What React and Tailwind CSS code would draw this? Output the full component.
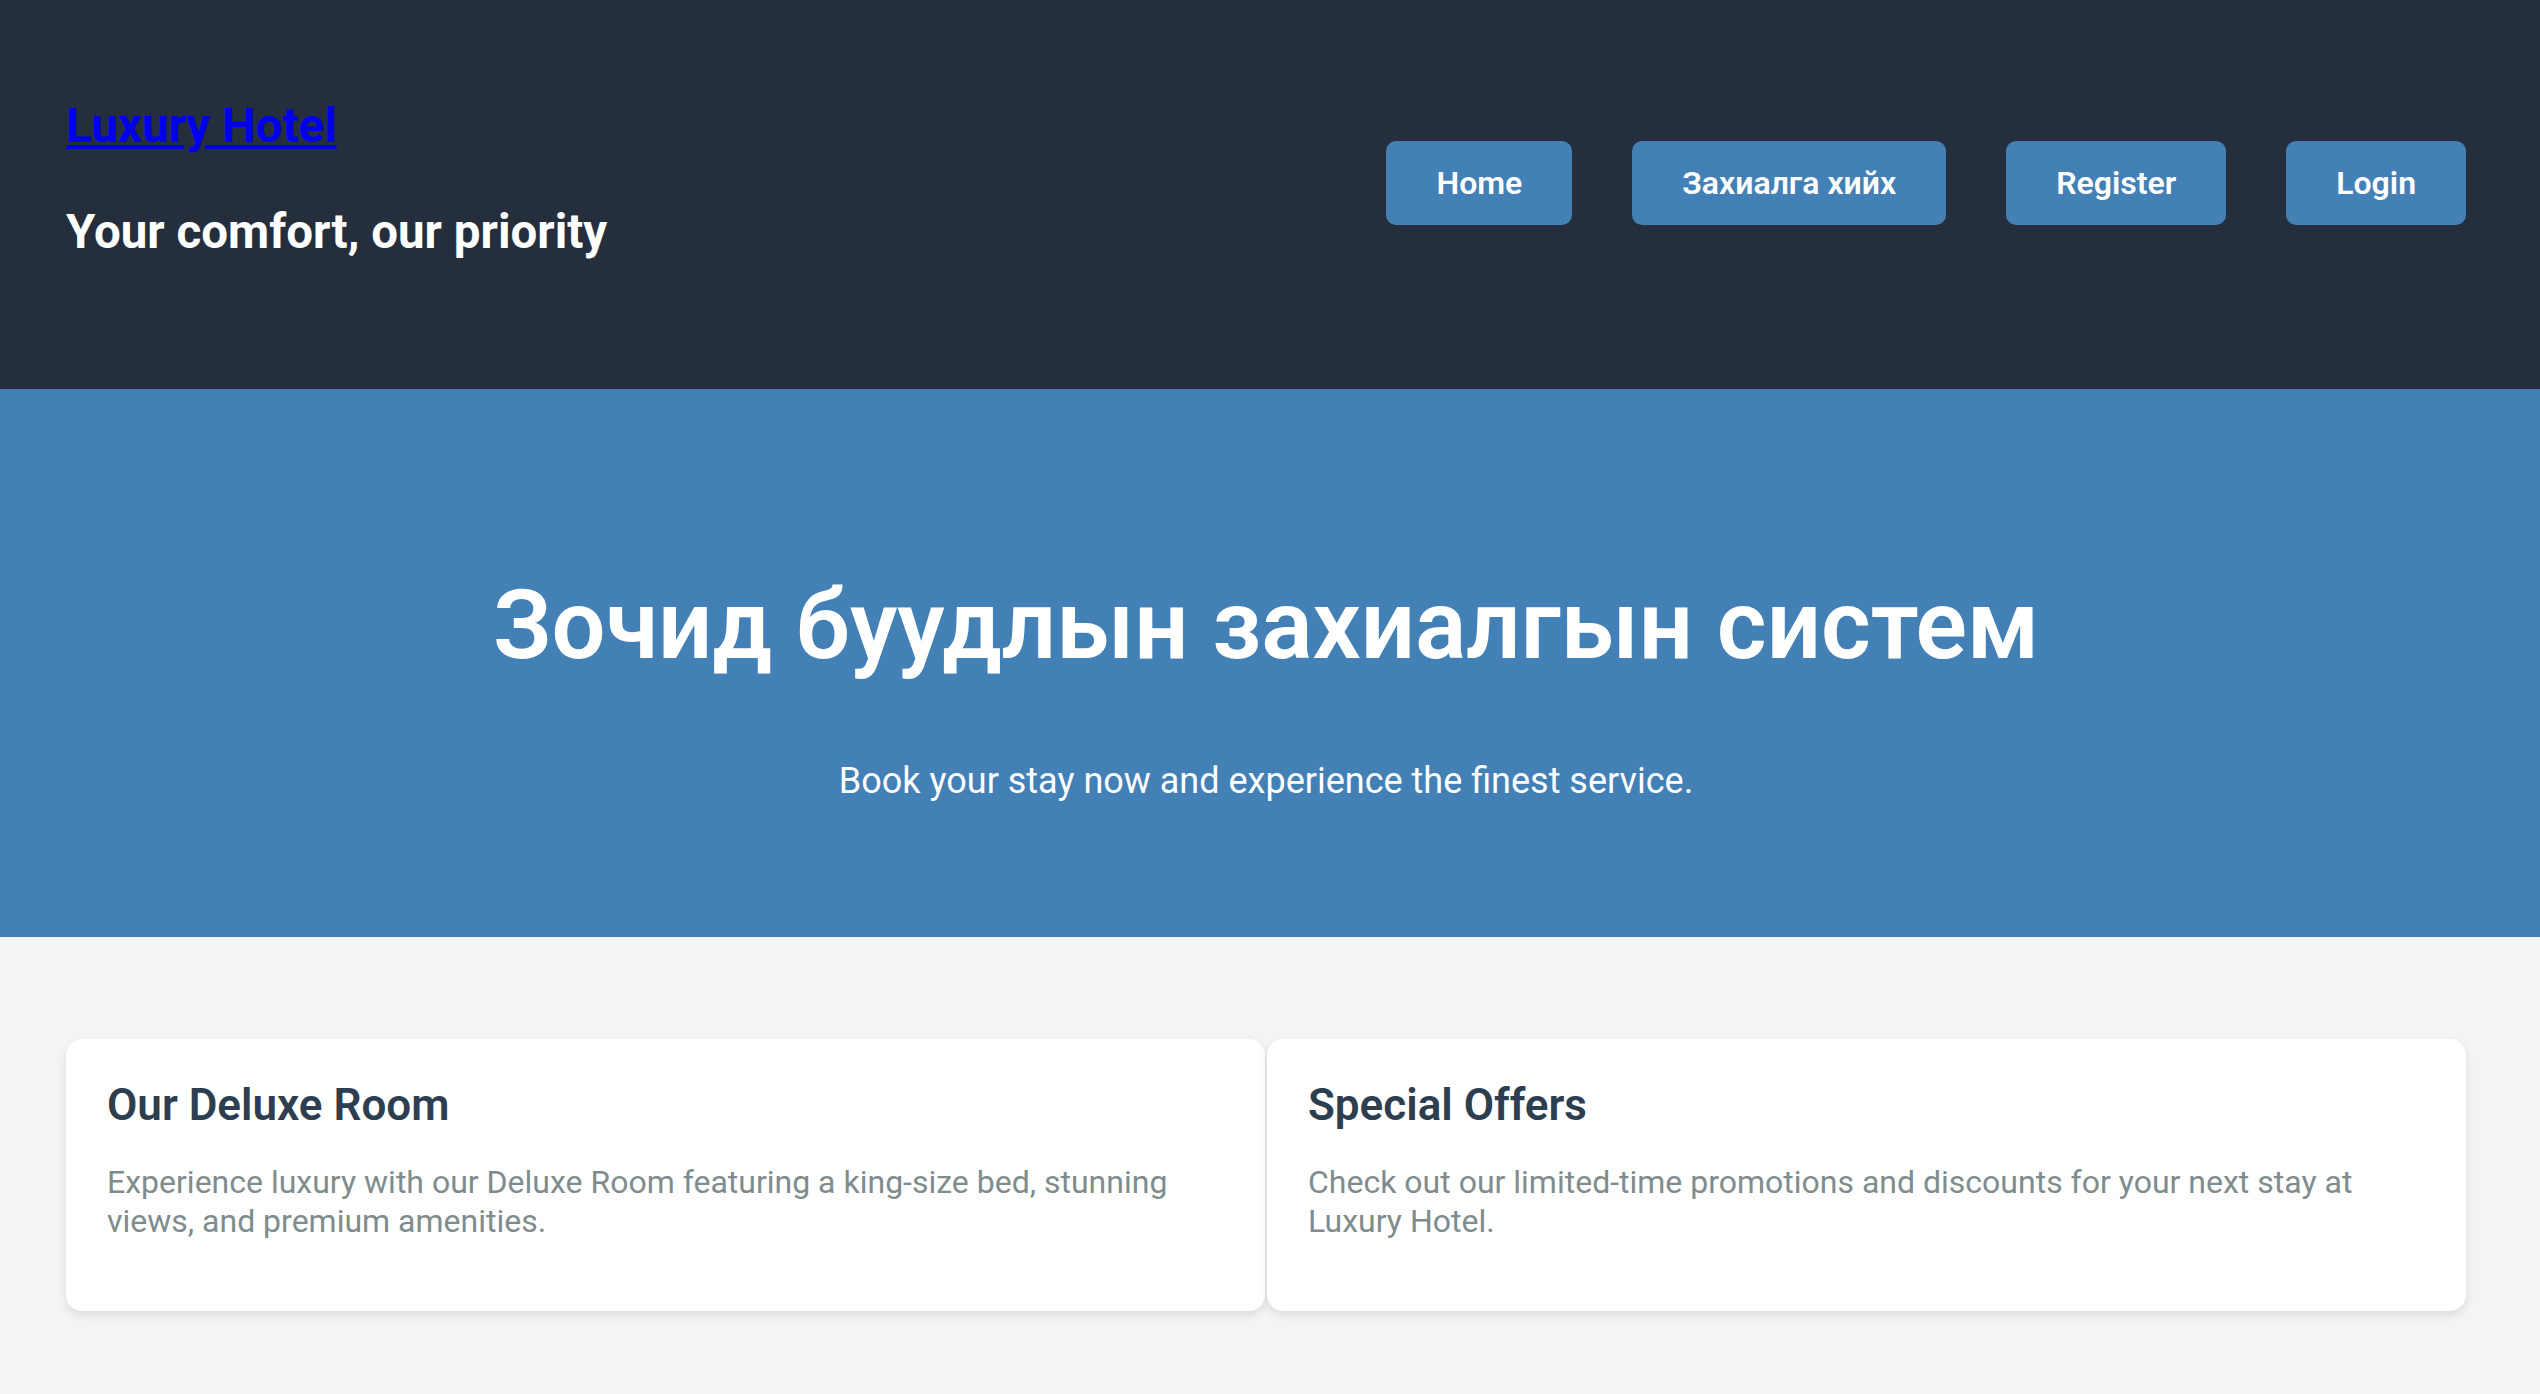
export default function App() {
  const links = ["Home", "Захиалга хийх", "Register", "Login"];

  return (
    <div className="min-h-screen bg-[#f4f4f4] font-['Roboto',sans-serif]">
      <header className="h-[389px] bg-[#242e3c] flex justify-between items-start pt-[98px] pl-[66px] pr-[74px]">
        <div>
          <h1 className="text-[47.5px] leading-[56px] font-bold">
            <a href="#" className="text-[#0000ee] underline">
              Luxury Hotel
            </a>
          </h1>
          <p className="mt-[50px] text-[47.5px] leading-[56px] font-bold text-white">
            Your comfort, our priority
          </p>
        </div>
        <nav className="mt-[43px] flex gap-[60px]">
          {links.map((l) => (
            <a
              key={l}
              href="#"
              className="h-[84px] px-[50px] flex items-center rounded-[10px] bg-[#4380b6] text-white text-[32px] font-semibold"
            >
              {l}
            </a>
          ))}
        </nav>
      </header>

      <section className="h-[548px] bg-[#4380b6] flex flex-col items-center pt-[180px] pr-[8px] text-white">
        <h2 className="text-[95.5px] leading-[112px] font-semibold">
          Зочид буудлын захиалгын систем
        </h2>
        <p className="mt-[78px] text-[36px] leading-[44px]">
          Book your stay now and experience the finest service.
        </p>
      </section>

      <section className="grid grid-cols-2 gap-[2px] pt-[102px] pb-[85px] pl-[66px] pr-[74px]">
        <div className="h-[272px] bg-white rounded-[16px] shadow-[0_4px_10px_rgba(0,0,0,0.1)] px-[41px] pt-[40px]">
          <h3 className="text-[44px] leading-[52px] font-semibold text-[#2c3e50]">
            Our Deluxe Room
          </h3>
          <p className="mt-[32px] text-[32px] leading-[39px] text-[#7f8c8d]">
            Experience luxury with our Deluxe Room featuring a king-size bed, stunning views, and premium amenities.
          </p>
        </div>
        <div className="h-[272px] bg-white rounded-[16px] shadow-[0_4px_10px_rgba(0,0,0,0.1)] px-[41px] pt-[40px]">
          <h3 className="text-[44px] leading-[52px] font-semibold text-[#2c3e50]">
            Special Offers
          </h3>
          <p className="mt-[32px] text-[32px] leading-[39px] text-[#7f8c8d]">
            Check out our limited-time promotions and discounts for your next stay at Luxury Hotel.
          </p>
        </div>
      </section>
    </div>
  );
}
